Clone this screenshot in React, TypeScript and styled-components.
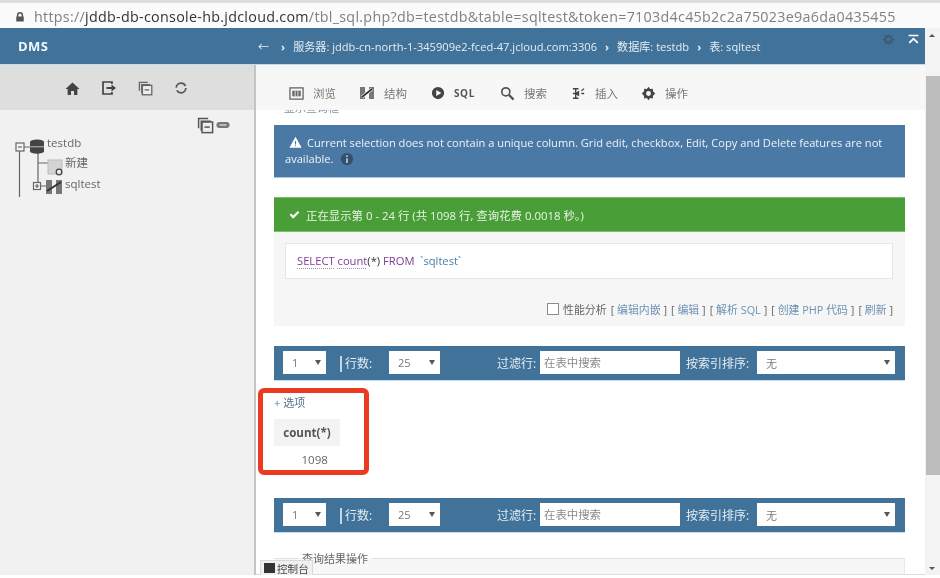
import React from "react";
import styled, { createGlobalStyle } from "styled-components";

const Global = createGlobalStyle`
  html, body { margin: 0; padding: 0; background: #fff; overflow: hidden; }
  * { box-sizing: border-box; }
  body { font-family: "Open Sans", "Noto Sans CJK SC", sans-serif; }
`;

const Page = styled.div`
  width: 940px; height: 578px; position: relative; overflow: hidden;
  display: flex; flex-direction: column; background: #fff; filter: blur(0.4px);
`;
const AddressBar = styled.div`
  height: 28px; flex: none; display: flex; align-items: center; gap: 9px;
  padding: 3px 0 0 15px; background: #fbfbfb; border-top: 3px solid #dedede;
  font: 14.3px/1 "Open Sans", sans-serif; letter-spacing: .29px; color: #808080;
  white-space: nowrap;
  b { font-weight: 400; color: #333; }
`;
const Body = styled.div`flex: 1; min-height: 0; display: flex;`;
const Left = styled.div`width: 925px; flex: none; display: flex; flex-direction: column;`;
const TopBar = styled.div`
  height: 37px; flex: none; background: #41739a; border-bottom: 1px solid #c6dbe9;
  display: flex; align-items: center; color: #fff; position: relative;
`;
const Logo = styled.div`width: 258px; padding-left: 18px; font: 700 13px "Open Sans", sans-serif; letter-spacing: .4px; color: #f4f7fa;`;
const Crumbs = styled.div`
  display: flex; align-items: center; gap: 8px; font: 11.1px "Open Sans", "Noto Sans CJK SC", sans-serif; color: #e6edf3; white-space: nowrap;
  i { font-style: normal; font-size: 11px; font-weight: 700; }
`;
const BackArrow = styled.span`margin-right: 4px;`;
const TopIcons = styled.div`position: absolute; top: 5px; right: 5px; display: flex; gap: 12px; align-items: center;`;
const Columns = styled.div`flex: 1; min-height: 0; display: flex;`;
const Sidebar = styled.div`
  width: 256px; flex: none; background: #f1f1f1; border-right: 2px solid #c4c4c4; display: flex; flex-direction: column;
  height: 510px;
`;
const SideTools = styled.div`
  height: 45px; background: #dedede; display: flex; align-items: center; padding: 1px 0 0 65px; gap: 21px;
`;
const TreeTools = styled.div`display: flex; justify-content: flex-end; align-items: center; gap: 2px; padding: 5px 24px 0 0; height: 25px;`;
const Tree = styled.div`position: relative; height: 70px; font: 11.5px "Open Sans", "Noto Sans CJK SC", sans-serif; color: #666;`;
const TreeLabel = styled.span<{ $x: number; $y: number }>`position: absolute; left: ${p => p.$x}px; top: ${p => p.$y}px; line-height: 14px;`;
const TreeArt = styled.svg`position: absolute; left: 0; top: 0;`;
const Main = styled.div`flex: 1; min-width: 0; display: flex; flex-direction: column; position: relative; height: 510px; overflow: hidden;`;
const Tabs = styled.div`
  height: 45px; flex: none; background: #f7f7f7; display: flex; align-items: center; padding: 11px 0 0 33px; position: relative; z-index: 1;
`;
const Tab = styled.div<{ $w: number }>`
  width: ${p => p.$w}px; flex: none; display: flex; align-items: center; gap: 9px;
  font: 11.5px "Open Sans", "Noto Sans CJK SC", sans-serif; color: #777; white-space: nowrap;
`;
const SqlTab = styled(Tab)`font-weight: 700; color: #555; font-size: 10px; letter-spacing: .6px; gap: 9px;`;
const Content = styled.div`flex: 1; padding: 0 20px 0 18px; position: relative;`;
const Clipped = styled.div`height: 15px; overflow: hidden; font: 11px/1 "Noto Sans CJK SC", sans-serif; color: #7d8fa8; padding-left: 10px; span { display: block; margin-top: -8px; }`;
const Notice = styled.div`
  height: 53px; background: #4a79a5; color: #eef3f8; font: 11.1px/16px "Open Sans", sans-serif; padding: 10px 10px 0 11px;
  border-bottom: 1px solid #a9c6de;
  svg { vertical-align: middle; margin: -3px 2px 0 4px; }
`;
const Success = styled.div`
  height: 35px; margin-top: 19px; background: #4a9e37; color: #e8f3e5; display: flex; align-items: center; gap: 6px;
  font: 11.4px "Open Sans", "Noto Sans CJK SC", sans-serif; padding: 0 0 0 15px; border-top: 1px solid #79c26a; border-bottom: 1px solid #79c26a;
`;
const QueryPanel = styled.div`height: 94px; background: #f6f6f6; padding: 11px 12px 0 11px; display: flex; flex-direction: column;`;
const SqlBox = styled.div`
  height: 36px; background: #fff; border: 1px solid #e6e6e6; padding-left: 11px; line-height: 34px;
  font-size: 11.2px; font-family: "Open Sans", sans-serif; white-space: pre; color: #7b3d97;
  u { text-decoration: underline dotted #999; text-underline-offset: 3px; }
  em { font-style: normal; color: #333; }
  s { text-decoration: none; color: #4a7ea8; }
`;
const Options = styled.div`
  margin-top: 22px; display: flex; justify-content: flex-end; align-items: center; gap: 4px;
  font: 10.9px "Open Sans", "Noto Sans CJK SC", sans-serif; color: #666; white-space: nowrap; padding-right: 0;
  a { color: #6d92b3; }
`;
const CheckBox = styled.span`width: 12px; height: 12px; border: 1px solid #8c8c8c; background: #fff; margin-right: 0;`;
const Nav = styled.div<{ $top: number }>`
  height: 35px; margin-top: ${p => p.$top}px; background: #41739a; border-bottom: 1px solid #c5dcec; display: flex; align-items: center; padding: 0 10px 1px 9px;
  font: 12px "Open Sans", "Noto Sans CJK SC", sans-serif; color: #e4ecf2; white-space: nowrap;
`;
const Select = styled.div<{ $w: number; $ml?: number }>`
  width: ${p => p.$w}px; margin-left: ${p => p.$ml ?? 0}px; height: 23px; background: #fff; flex: none; display: flex; align-items: center; justify-content: space-between;
  padding: 0 5px 0 9px; color: #777; font-size: 11px;
  &::after { content: ""; border-left: 3.5px solid transparent; border-right: 3.5px solid transparent; border-top: 5px solid #555; }
`;
const NavLabel = styled.span<{ $ml: number; $w: number }>`margin-left: ${p => p.$ml}px; width: ${p => p.$w}px; flex: none;`;
const Divider = styled.span`width: 2px; height: 16px; background: #c7d6e5; margin: 2px 0 0 14px;`;
const Filter = styled.div`
  width: 140px; height: 23px; background: #fff; margin-left: 4px; padding-left: 4px; flex: none; line-height: 23px; color: #8a8a8a; font-size: 11.4px;
`;
const Toggle = styled.div`height: 15px; margin-top: 14px; font: 11px/15px "Open Sans", "Noto Sans CJK SC", sans-serif; color: #59748c;`;
const ResultTable = styled.table`
  border-collapse: collapse; margin-top: 9px; font: 11.6px "Open Sans", sans-serif; color: #555;
  th { width: 66px; height: 27px; background: #f3f3f3; font-weight: 700; text-align: center; padding: 0; color: #555; }
  td { height: 27px; text-align: right; padding: 0 12px 0 0; color: #666; }
`;
const Fieldset = styled.fieldset`
  margin: 20px 0 0; padding: 0; border: 0; border-top: 1px solid #e0e0e0; background: #f7f7f7; height: 40px; border-right: 1px solid #e8e8e8;
  font: 11px "Noto Sans CJK SC", sans-serif; color: #666;
  legend { margin-left: 24px; padding: 0 4px; line-height: 1; }
`;
const ConsoleTab = styled.div`
  position: absolute; left: 4px; bottom: 0; height: 15px; width: 53px; padding-left: 3px; display: flex; align-items: center; gap: 2px;
  background: #f0f0f0; border: 1px solid #d8d8d8; border-bottom: 0; font: 10.6px "Noto Sans CJK SC", sans-serif; color: #444; z-index: 1;
  &::before { content: ""; width: 11px; height: 10px; background: #333; flex: none; }
`;
const ConsoleBar = styled.div`position: absolute; left: 0; right: 0; bottom: 0; height: 1px; background: #ddd;`;
const ScrollBar = styled.div`
  width: 15px; flex: none; height: 547px; background: #f3f3f3; display: flex; flex-direction: column; position: relative;
`;
const Arrow = styled.div<{ $down?: boolean }>`
  position: absolute; left: 4px; ${p => (p.$down ? "bottom: 5px;" : "top: 6px;")}
  border-left: 3.5px solid transparent; border-right: 3.5px solid transparent;
  ${p => (p.$down ? "border-top: 3.5px solid #555;" : "border-bottom: 3.5px solid #555;")}
`;
const Thumb = styled.div`margin-top: 48px; height: 399px; background: #bdbdbd; margin-left: 1px;`;
const Highlight = styled.div`
  position: absolute; left: 258px; top: 388px; width: 111px; height: 87px; border: 5px solid #ea3a22; border-radius: 6px; pointer-events: none;
`;

const I = ({ c = "#555", s = 14, children, vb = "0 0 16 16" }: { c?: string; s?: number; children: React.ReactNode; vb?: string }) => (
  <svg width={s} height={s} viewBox={vb} fill={c} style={{ flex: "none" }}>{children}</svg>
);
const Gear = ({ c = "#444", s = 14 }: { c?: string; s?: number }) => (
  <I c={c} s={s}>
    <path fillRule="evenodd" d="M8 .8l1.7 2.3 2.9-.3.2 2.9L15.2 8l-2.4 2.3-.2 2.9-2.9-.3L8 15.2l-1.7-2.3-2.9.3-.2-2.9L.8 8l2.4-2.3.2-2.9 2.9.3L8 .8zM8 5.4a2.6 2.6 0 100 5.2 2.6 2.6 0 000-5.2z" />
  </I>
);
const Copies = ({ s = 14, c = "#666" }: { s?: number; c?: string }) => (
  <I s={s} c="none">
    <path d="M1.5 10.5v-9h9M4 13V4h9" stroke={c} strokeWidth="1.4" fill="none" />
    <rect x="4.7" y="4.7" width="10" height="10" stroke={c} strokeWidth="1.4" fill="#eee" />
    <path d="M7 9.5h5" stroke={c} strokeWidth="1.4" />
  </I>
);
const Structure = ({ s = 16 }: { s?: number }) => (
  <I s={s} c="#555">
    <path d="M1 2h5v12H1zM10 2h5v12h-5z" fill="#777" />
    <path d="M3 12L13 4" stroke="#f7f7f7" strokeWidth="3" />
    <path d="M3 12L13 4" stroke="#333" strokeWidth="1.7" />
  </I>
);

const NavRow = ({ top }: { top: number }) => (
  <Nav $top={top}>
    <Select $w={43}>1</Select>
    <Divider />
    <NavLabel $ml={3} $w={27}>行数:</NavLabel>
    <Select $w={51} $ml={17}>25</Select>
    <NavLabel $ml={57} $w={39}>过滤行:</NavLabel>
    <Filter>在表中搜索</Filter>
    <NavLabel $ml={6} $w={63}>按索引排序:</NavLabel>
    <Select $w={138} $ml={8}>无</Select>
  </Nav>
);

export default function App() {
  return (
    <Page>
      <Global />
      <AddressBar>
        <I c="#555" s={10}>
          <path d="M3 7V5a5 5 0 0110 0v2h1v8H2V7zm2.4 0h5.2V5a2.6 2.6 0 00-5.2 0z" />
        </I>
        <span>https://<b>jddb-db-console-hb.jdcloud.com</b>/tbl_sql.php?db=testdb&amp;table=sqltest&amp;token=7103d4c45b2c2a75023e9a6da0435455</span>
      </AddressBar>
      <Body>
        <Left>
          <TopBar>
            <Logo>DMS</Logo>
            <Crumbs>
              <BackArrow>←</BackArrow><i>›</i><span>服务器: jddb-cn-north-1-345909e2-fced-47.jcloud.com:3306</span><i>›</i><span>数据库: testdb</span><i>›</i><span>表: sqltest</span>
            </Crumbs>
            <TopIcons>
              <Gear c="#3a5d78" s={13} />
              <I c="#fff" s={13}><path d="M2 2h12v2H2zM8 5.5l6 6-1.5 1.5L8 8.5 3.5 13 2 11.5z" /></I>
            </TopIcons>
          </TopBar>
          <Columns>
            <Sidebar>
              <SideTools>
                <I c="#444" s={15}><path d="M8 1.5L.5 8.5h2.3V15h3.6v-4.4h3.2V15h3.6V8.5h2.3z" /></I>
                <I c="none" s={16}><path d="M11 4V2H2v12h9v-2" stroke="#444" strokeWidth="1.7" fill="none" /><path d="M5.5 7h5V4.5L15 8l-4.5 3.5V9h-5z" fill="#444" /></I>
                <Copies s={15} c="#666" />
                <I c="none" s={14}><circle cx="8" cy="8" r="5.5" stroke="#555" strokeWidth="2" fill="none" strokeDasharray="14 3.3" /></I>
              </SideTools>
              <TreeTools>
                <Copies s={17} c="#555" />
                <I c="#777" s={14}><rect x="0.5" y="4.5" width="15" height="7" rx="3.5" /><path d="M4 8h8" stroke="#ddd" strokeWidth="1.5" /></I>
              </TreeTools>
              <Tree>
                <TreeArt width="100" height="70" viewBox="0 0 100 70">
                  <g stroke="#666" strokeWidth="1.2" fill="none">
                    <path d="M19.5 12v50" />
                    <path d="M24 12h6M38 18v34M38 28h10M41 51h5" />
                    <rect x="16" y="8" width="8" height="8" fill="#f5f5f5" />
                    <path d="M18 12h4" />
                    <rect x="33.5" y="47.5" width="7" height="7" fill="#f5f5f5" />
                    <path d="M35 51h4M37 49v4" />
                  </g>
                  <ellipse cx="37" cy="7" rx="7" ry="2.6" fill="#444" />
                  <rect x="30" y="7" width="14" height="4.5" fill="#444" />
                  <rect x="30" y="12.2" width="14" height="4" fill="#444" />
                  <ellipse cx="37" cy="16.2" rx="7" ry="2.6" fill="#444" />
                  <rect x="48" y="25" width="14" height="14" fill="#d4d4d4" stroke="#bbb" />
                  <circle cx="59" cy="37" r="2.8" fill="#eee" stroke="#444" strokeWidth="1.3" />
                  <path d="M46 45h6v14h-6zM56 45h6v14h-6z" fill="#777" />
                  <path d="M47 56L61 47" stroke="#333" strokeWidth="2" />
                </TreeArt>
                <TreeLabel $x={47} $y={1}>testdb</TreeLabel>
                <TreeLabel $x={65} $y={21}>新建</TreeLabel>
                <TreeLabel $x={65} $y={42}>sqltest</TreeLabel>
              </Tree>
            </Sidebar>
            <Main>
              <Tabs>
                <Tab $w={70}>
                  <I c="none" s={15}><rect x="1" y="2" width="14" height="12" stroke="#666" strokeWidth="1.4" fill="none" /><path d="M3.5 5h9v6h-9z" fill="#666" /><path d="M6.5 5v6M9.5 5v6" stroke="#eee" /></I>
                  浏览
                </Tab>
                <Tab $w={72}><Structure />结构</Tab>
                <SqlTab $w={69}>
                  <I c="#444" s={14}><path fillRule="evenodd" d="M8 1a7 7 0 110 14A7 7 0 018 1zM6 4.5v7L12 8z" /></I>
                  SQL
                </SqlTab>
                <Tab $w={71}>
                  <I c="none" s={15}><circle cx="6.2" cy="6.2" r="4.3" stroke="#555" strokeWidth="1.8" fill="none" /><path d="M9.5 9.5L14.5 14.5" stroke="#555" strokeWidth="2.4" /></I>
                  搜索
                </Tab>
                <Tab $w={70}>
                  <I c="none" s={15}><path d="M2 3h6M5 3v10M2 8h6M2 13h6" stroke="#444" strokeWidth="1.5" /><path d="M5 8l3-2v4zM11 5l3-2M11 8h3" stroke="#444" strokeWidth="1.4" /></I>
                  插入
                </Tab>
                <Tab $w={60}><Gear c="#444" s={15} />操作</Tab>
              </Tabs>
              <Content>
                <Clipped><span>显示查询框</span></Clipped>
                <Notice>
                  <I c="#fff" s={13}><path d="M8 1l7.5 13.5H.5z" /><path d="M7.3 6h1.4v4.5H7.3zM7.3 11.3h1.4v1.4H7.3z" fill="#4a79a5" /></I>
                  {" "}Current selection does not contain a unique column. Grid edit, checkbox, Edit, Copy and Delete features are not available.{" "}
                  <I c="#34506b" s={14}><circle cx="8" cy="8" r="7" /><path d="M7 7h2v5.5H7zM7 3.8h2v2H7z" fill="#b7c5d2" /></I>
                </Notice>
                <Success>
                  <I c="#fff" s={11}><path d="M1 8.5l2-2 3 3L13 3l2 2-9 9z" /></I>
                  正在显示第 0 - 24 行 (共 1098 行, 查询花费 0.0018 秒。)
                </Success>
                <QueryPanel>
                  <SqlBox><u>SELECT</u> <u>count</u><em>(*)</em> FROM <s> `sqltest`</s></SqlBox>
                  <Options>
                    <CheckBox />
                    <span>性能分析</span>
                    <span>[ <a>编辑内嵌</a> ]</span>
                    <span>[ <a>编辑</a> ]</span>
                    <span>[ <a>解析 SQL</a> ]</span>
                    <span>[ <a>创建 PHP 代码</a> ]</span>
                    <span>[ <a>刷新</a> ]</span>
                  </Options>
                </QueryPanel>
                <NavRow top={20} />
                <Toggle>+ 选项</Toggle>
                <ResultTable>
                  <thead><tr><th>count(*)</th></tr></thead>
                  <tbody><tr><td>1098</td></tr></tbody>
                </ResultTable>
                <NavRow top={25} />
                <Fieldset><legend>查询结果操作</legend></Fieldset>
              </Content>
              <ConsoleBar />
              <ConsoleTab>控制台</ConsoleTab>
            </Main>
          </Columns>
        </Left>
        <ScrollBar>
          <Arrow />
          <Thumb />
          <Arrow $down />
        </ScrollBar>
      </Body>
      <Highlight />
    </Page>
  );
}
